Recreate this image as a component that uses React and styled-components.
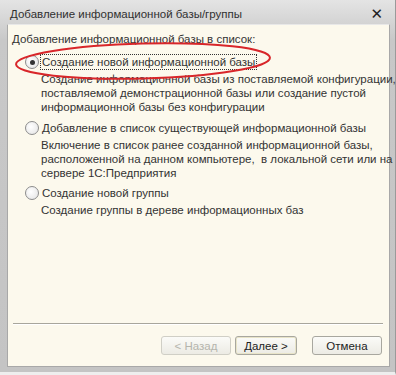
import React from "react";
import styled, { createGlobalStyle } from "styled-components";

const Global = createGlobalStyle`
  html, body { margin: 0; padding: 0; background: #ffffff; }
  body { font-family: "Liberation Sans", Arial, sans-serif; }
`;

const Window = styled.div`
  position: relative;
  width: 396px;
  height: 375px;
  box-sizing: border-box;
  display: flex;
  flex-direction: column;
  background: linear-gradient(#e4e4e4, #c8c8c8 40px, #c4c4c4);
  border-right: 1px solid #9a9a9a;
  border-bottom: 3px solid #eeeeee;
`;

const TitleBar = styled.div`
  height: 24px;
  box-sizing: border-box;
  padding: 3px 12px 0 10px;
  display: flex;
  align-items: center;
  justify-content: space-between;
  color: #303030;
  font-size: 11.5px;
`;

const Close = styled.span`
  font-size: 15px;
  font-weight: bold;
  color: #222;
  font-family: "DejaVu Sans", sans-serif;
`;

const Body = styled.div`
  flex: 1;
  margin: 0 5px 5px 7px;
  background: #fcf9ed;
  border: 1px solid #a8a8a8;
  border-top-color: #e8e8e8;
  display: flex;
  flex-direction: column;
  padding: 7px 4px 0 4px;
  font-size: 11.5px;
  color: #333;
  white-space: nowrap;
`;

const Heading = styled.div`
  line-height: 14px;
  margin-bottom: 8px;
`;

const Option = styled.div`
  display: flex;
  flex-direction: column;
  margin-bottom: ${(p) => p.gap}px;
`;

const RadioRow = styled.div`
  display: flex;
  align-items: center;
  gap: 1px;
  padding-left: 13px;
  height: 16px;
`;

const Circle = styled.span`
  width: 12px;
  height: 12px;
  border-radius: 50%;
  border: 1px solid #8c8c8c;
  background: radial-gradient(circle at 40% 40%, #ffffff, #e2e2e2);
  display: flex;
  align-items: center;
  justify-content: center;
  flex: none;
`;

const Dot = styled.span`
  width: 5px;
  height: 5px;
  border-radius: 50%;
  background: #333;
`;

const Label = styled.span`
  line-height: 14px;
  padding: 0 1px;
  border: 1px dotted ${(p) => (p.focused ? "#333" : "transparent")};
`;

const Desc = styled.div`
  padding-left: 29px;
  line-height: 14px;
  margin-top: 2px;
`;

const Spacer = styled.div`
  flex: 1;
`;

const Separator = styled.div`
  height: 1px;
  background: #a8a69c;
  border-bottom: 1px solid #ffffff;
  margin: 0 2px 0 1px;
`;

const Buttons = styled.div`
  display: flex;
  justify-content: flex-end;
  align-items: flex-start;
  gap: 4px;
  padding: 11px 3px 0 0;
  height: 30px;
`;

const Button = styled.button`
  width: ${(p) => p.w}px;
  height: 19px;
  margin-left: ${(p) => p.ml || 0}px;
  font-family: "Liberation Sans", Arial, sans-serif;
  font-size: 11.5px;
  color: ${(p) => (p.disabled ? "#b5b5ad" : "#222")};
  background: linear-gradient(#fbfbf8, #ecebe4);
  border: 1px solid ${(p) => (p.disabled ? "#d0cfc6" : "#a8a79f")};
  border-radius: 3px;
  padding: 0;
  box-shadow: ${(p) => (p.def ? "inset 0 0 0 1px #e8e4c8" : "none")};
`;

const Ellipse = styled.svg`
  position: absolute;
  left: 13px;
  top: 41px;
  pointer-events: none;
`;

export default function App() {
  return (
    <>
      <Global />
      <Window>
        <TitleBar>
          <span>Добавление информационной базы/группы</span>
          <Close>✕</Close>
        </TitleBar>
        <Body>
          <Heading>Добавление информационной базы в список:</Heading>
          <Option gap={6}>
            <RadioRow>
              <Circle>
                <Dot />
              </Circle>
              <Label focused>Создание новой информационной базы</Label>
            </RadioRow>
            <Desc>
              Создание информационной базы из поставляемой конфигурации,
              <br />
              поставляемой демонстрационной базы или создание пустой
              <br />
              информационной базы без конфигурации
            </Desc>
          </Option>
          <Option gap={5}>
            <RadioRow>
              <Circle />
              <Label>Добавление в список существующей информационной базы</Label>
            </RadioRow>
            <Desc>
              Включение в список ранее созданной информационной базы,
              <br />
              расположенной на данном компьютере,&nbsp; в локальной сети или на
              <br />
              сервере 1С:Предприятия
            </Desc>
          </Option>
          <Option gap={0}>
            <RadioRow>
              <Circle />
              <Label>Создание новой группы</Label>
            </RadioRow>
            <Desc>Создание группы в дереве информационных баз</Desc>
          </Option>
          <Spacer />
          <Separator />
          <Buttons>
            <Button w={70} disabled>
              &lt; Назад
            </Button>
            <Button w={62} def>
              Далее &gt;
            </Button>
            <Button w={70} ml={11}>
              Отмена
            </Button>
          </Buttons>
        </Body>
        <Ellipse width="264" height="42" viewBox="0 0 264 42">
          <ellipse
            cx="130"
            cy="20"
            rx="127"
            ry="17.5"
            fill="none"
            stroke="#d8262a"
            strokeWidth="2"
            transform="rotate(-1.5 130 20)"
          />
        </Ellipse>
      </Window>
    </>
  );
}
